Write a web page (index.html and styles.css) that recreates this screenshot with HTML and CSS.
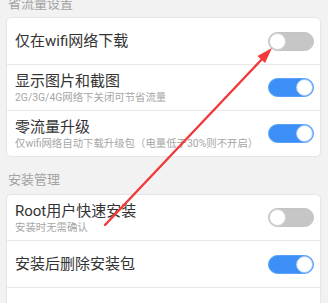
FILE: index.html
```html
<!DOCTYPE html>
<html lang="zh-CN">
<head>
<meta charset="utf-8">
<link rel="stylesheet" href="styles.css">
</head>
<body>
<div class="page">
  <div class="section-title first">省流量设置</div>
  <div class="card">
    <div class="row">
      <div class="text"><div class="title">仅在wifi网络下载</div></div>
      <span class="switch off"><span class="knob"></span></span>
    </div>
    <div class="row sub">
      <div class="text">
        <div class="title">显示图片和截图</div>
        <div class="desc">2G/3G/4G网络下关闭可节省流量</div>
      </div>
      <span class="switch on"><span class="knob"></span></span>
    </div>
    <div class="row sub">
      <div class="text">
        <div class="title">零流量升级</div>
        <div class="desc">仅wifi网络自动下载升级包（电量低于30%则不开启）</div>
      </div>
      <span class="switch on"><span class="knob"></span></span>
    </div>
  </div>
  <div class="section-title">安装管理</div>
  <div class="card">
    <div class="row sub">
      <div class="text">
        <div class="title">Root用户快速安装</div>
        <div class="desc">安装时无需确认</div>
      </div>
      <span class="switch off"><span class="knob"></span></span>
    </div>
    <div class="row">
      <div class="text"><div class="title">安装后删除安装包</div></div>
      <span class="switch on"><span class="knob"></span></span>
    </div>
    <div class="row empty"></div>
  </div>
</div>
<svg class="arrow" width="328" height="303" viewBox="0 0 328 303">
  <line x1="105" y1="225" x2="264" y2="57" stroke="#f2393a" stroke-width="2.4" stroke-linecap="round"/>
  <polygon points="272,48 257.5,56 265,63" fill="#f2393a"/>
</svg>
</body>
</html>
```

FILE: styles.css
```css
html, body {
  margin: 0;
  padding: 0;
}
body {
  background: #f2f2f2;
  font-family: Roboto, "Noto Sans CJK SC", sans-serif;
  width: 328px;
  height: 303px;
  overflow: hidden;
  position: relative;
}
.page {
  padding: 0 7px 0 6px;
}
.section-title {
  font-size: 13px;
  line-height: 17px;
  color: #a3a3a3;
  padding-left: 2px;
  margin: 14px 0 6px;
}
.section-title.first {
  margin: -5px 0 5px;
}
.card {
  background: #fff;
  border: 1px solid #e6e6e6;
  border-radius: 5px;
  box-shadow: 0 0 1px rgba(0,0,0,0.04);
}
.row {
  display: flex;
  align-items: center;
  justify-content: space-between;
  padding: 13px 6px 13px 8px;
  border-bottom: 1px solid #e8e8e8;
}
.row:last-child {
  border-bottom: none;
}
.row.sub {
  padding-top: 6px;
  padding-bottom: 6px;
}
.row.empty {
  height: 30px;
  padding: 0;
}
.title {
  font-size: 15px;
  line-height: 20px;
  color: #333;
}
.desc {
  font-size: 10.4px;
  line-height: 13px;
  color: #a6a6a6;
}
.switch {
  flex: none;
  position: relative;
  width: 46px;
  height: 19px;
  border-radius: 10px;
  box-sizing: border-box;
}
.switch.off {
  background: #c6c6c6;
  border: 1px solid #c3c3c3;
}
.switch.on {
  background: #3b8ff6;
  border: 1px solid #5aa2f8;
}
.knob {
  position: absolute;
  top: 0;
  width: 17px;
  height: 17px;
  border-radius: 50%;
  background: #fff;
  box-sizing: border-box;
}
.switch.off .knob {
  left: 0;
  border: 1px solid #d0d0d0;
}
.switch.on .knob {
  right: 0;
  border: 1px solid #9cc6fa;
}
.arrow {
  position: absolute;
  left: 0;
  top: 0;
  pointer-events: none;
}
```
